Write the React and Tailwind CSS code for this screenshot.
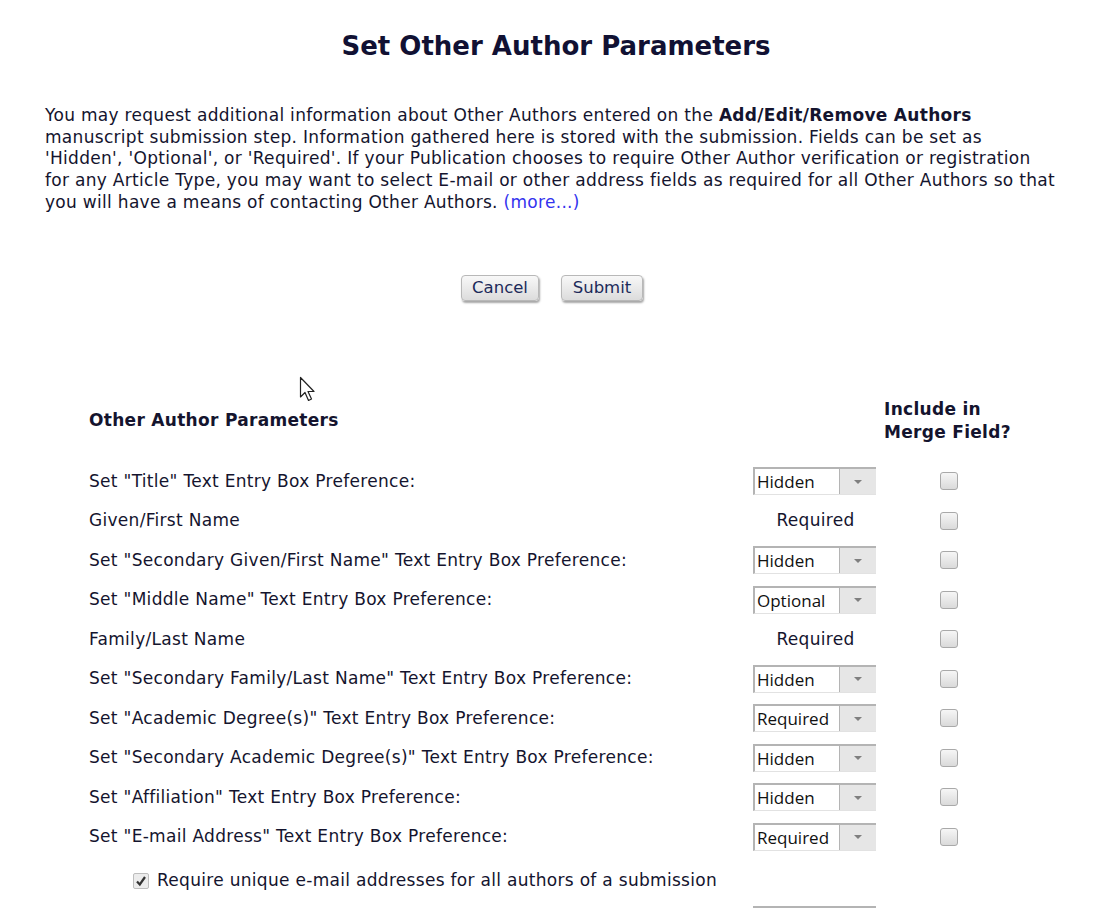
import React from "react";

const rows = [
  { label: 'Set "Title" Text Entry Box Preference:', value: "Hidden" },
  { label: "Given/First Name", fixed: "Required" },
  { label: 'Set "Secondary Given/First Name" Text Entry Box Preference:', value: "Hidden" },
  { label: 'Set "Middle Name" Text Entry Box Preference:', value: "Optional" },
  { label: "Family/Last Name", fixed: "Required" },
  { label: 'Set "Secondary Family/Last Name" Text Entry Box Preference:', value: "Hidden" },
  { label: 'Set "Academic Degree(s)" Text Entry Box Preference:', value: "Required" },
  { label: 'Set "Secondary Academic Degree(s)" Text Entry Box Preference:', value: "Hidden" },
  { label: 'Set "Affiliation" Text Entry Box Preference:', value: "Hidden" },
  { label: 'Set "E-mail Address" Text Entry Box Preference:', value: "Required" },
];

function Box() {
  return (
    <span className="block h-[18px] w-[18px] rounded-[3px] border border-[#a9a9a9] bg-gradient-to-b from-[#f6f6f6] to-[#dadada]" />
  );
}

function Select({ value }) {
  return (
    <div className="flex h-[28px] w-[123px] border-t-2 border-l-2 border-[#b4b4b4] border-b border-b-[#e2e2e2]">
      <div className="flex w-[84px] items-center bg-white pl-[2px] text-[17px] tracking-normal text-[#111] [font-family:'Open_Sans',sans-serif]">
        {value}
      </div>
      <div className="flex flex-1 items-center justify-center border-l border-[#b4b4b4] bg-[#e6e6e6]">
        <svg width="10" height="6" viewBox="0 0 10 6">
          <path d="M1 1 L9 1 L5 5 Z" fill="#7f7f7f" />
        </svg>
      </div>
    </div>
  );
}

function Btn({ children, w }) {
  return (
    <button
      className={`h-[26px] ${w} rounded-[4px] border border-[#b8b8b8] bg-gradient-to-b from-[#f8f8f8] to-[#dcdcdc] text-[16.5px] tracking-normal text-[#1c2a5a] shadow-[1px_2px_2px_rgba(0,0,0,0.35)]`}
    >
      {children}
    </button>
  );
}

export default function App() {
  return (
    <div className="relative h-[908px] w-[1112px] overflow-hidden bg-white text-[17px] tracking-[0.3px] text-[#14142e] [font-family:'DejaVu_Sans',Verdana,sans-serif]">
      <h1 className="pt-[31px] text-center text-[26px] font-bold leading-[30px] tracking-normal text-[#111133]">
        Set Other Author Parameters
      </h1>

      <p className="mt-[44px] whitespace-nowrap pl-[45px] leading-[21.7px]">
        You may request additional information about Other Authors entered on the{" "}
        <b>Add/Edit/Remove Authors</b>
        <br />
        manuscript submission step. Information gathered here is stored with the submission. Fields
        can be set as
        <br />
        'Hidden', 'Optional', or 'Required'. If your Publication chooses to require Other Author
        verification or registration
        <br />
        for any Article Type, you may want to select E-mail or other address fields as required for
        all Other Authors so that
        <br />
        you will have a means of contacting Other Authors.{" "}
        <span className="text-[#3333ee]">(more...)</span>
      </p>

      <div className="mt-[61px] flex justify-center gap-[22px] pr-[8px]">
        <Btn w="w-[78px]">Cancel</Btn>
        <Btn w="w-[82px]">Submit</Btn>
      </div>

      <div className="mt-[97px] pl-[89px]">
        <div className="flex items-center">
          <div className="w-[795px] font-bold">Other Author Parameters</div>
          <div className="font-bold leading-[23px]">
            Include in
            <br />
            Merge Field?
          </div>
        </div>

        <div className="mt-[18px]">
          {rows.map((r) => (
            <div key={r.label} className="flex h-[39.5px] items-center">
              <div className="w-[664px]">{r.label}</div>
              <div className="flex w-[123px] justify-center">
                {r.fixed ? <span className="pl-[2px]">{r.fixed}</span> : <Select value={r.value} />}
              </div>
              <div className="flex w-[146px] justify-center">
                <Box />
              </div>
            </div>
          ))}
          <div className="flex h-[44px] items-center gap-[8px] pl-[44px] pt-[4px]">
            <span className="flex h-[16px] w-[16px] items-center justify-center rounded-[2px] border border-[#bdbdbd] bg-[#ececec]">
              <svg width="12" height="12" viewBox="0 0 12 12">
                <path d="M2 6.5 L4.8 9.5 L10 2" fill="none" stroke="#333" strokeWidth="2.2" />
              </svg>
            </span>
            Require unique e-mail addresses for all authors of a submission
          </div>
          <div className="flex h-[39.5px] items-center">
            <div className="w-[664px]">Set "Phone Number" Text Entry Box Preference:</div>
            <div className="flex w-[123px] justify-center">
              <Select value="Hidden" />
            </div>
            <div className="flex w-[146px] justify-center">
              <Box />
            </div>
          </div>
        </div>
      </div>

      <svg className="absolute left-[299px] top-[376px]" width="20" height="28" viewBox="0 0 20 28">
        <path
          d="M1.5 1.5 L1.5 21 L6 16.5 L9.5 24.5 L12.5 23 L9 15.5 L15 15.5 Z"
          fill="#fff"
          stroke="#222"
          strokeWidth="1.2"
          strokeLinejoin="round"
        />
      </svg>
    </div>
  );
}
